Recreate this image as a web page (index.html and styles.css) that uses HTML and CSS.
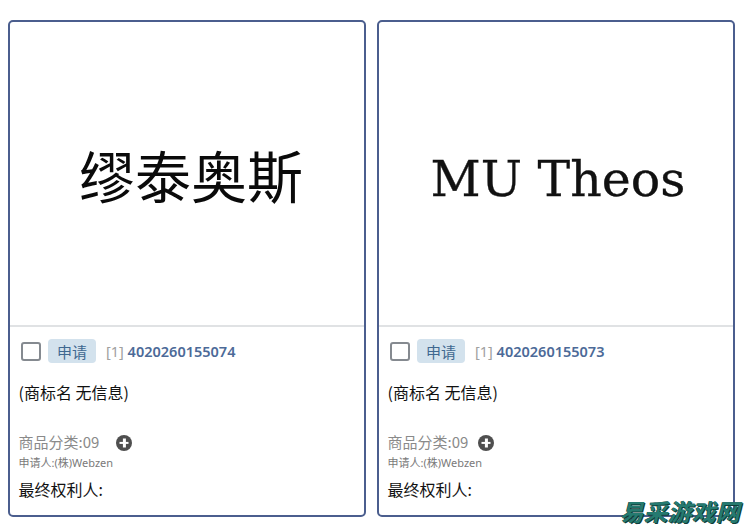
FILE: index.html
```html
<!DOCTYPE html>
<html lang="zh">
<head>
<meta charset="utf-8">
<title>商标</title>
<link rel="stylesheet" href="styles.css">
</head>
<body>
<div class="cards">
  <div class="card">
    <div class="logo"><span class="logo-cn">缪泰奥斯</span></div>
    <div class="info">
      <div class="row-top">
        <span class="checkbox"></span>
        <span class="apply-btn">申请</span>
        <span class="num"><span class="idx">[1]</span> 4020260155074</span>
      </div>
      <div class="name">(商标名 无信息)</div>
      <div class="category">商品分类:09<span class="plus plus-wide"></span></div>
      <div class="applicant">申请人:(株)Webzen</div>
      <div class="owner">最终权利人:</div>
    </div>
  </div>
  <div class="card">
    <div class="logo"><span class="logo-en">MU Theos</span></div>
    <div class="info">
      <div class="row-top">
        <span class="checkbox"></span>
        <span class="apply-btn">申请</span>
        <span class="num"><span class="idx">[1]</span> 4020260155073</span>
      </div>
      <div class="name">(商标名 无信息)</div>
      <div class="category">商品分类:09<span class="plus"></span></div>
      <div class="applicant">申请人:(株)Webzen</div>
      <div class="owner">最终权利人:</div>
    </div>
  </div>
</div>
<div class="watermark">易采游戏网</div>
</body>
</html>
```

FILE: styles.css
```css
html, body {
  margin: 0;
  padding: 0;
  background: #ffffff;
}
body {
  font-family: "Noto Sans", "Noto Sans CJK SC", sans-serif;
  color: #111;
  position: relative;
  width: 746px;
  height: 531px;
  overflow: hidden;
}
.cards {
  display: flex;
  gap: 11px;
  padding: 20px 0 0 8px;
}
.card {
  box-sizing: border-box;
  width: 358px;
  height: 497px;
  border: 2.5px solid #4b5e8e;
  border-radius: 5px;
  display: flex;
  flex-direction: column;
  background: #fff;
}
.logo {
  height: 303px;
  border-bottom: 2px solid #e0e2e4;
  display: flex;
  align-items: center;
  justify-content: center;
}
.logo-cn {
  font-family: "Noto Sans CJK SC", sans-serif;
  font-size: 56px;
  color: #0a0a0a;
  line-height: 1;
  margin-left: 8px;
}
.logo-en {
  font-family: "DejaVu Serif", serif;
  font-size: 49px;
  color: #111;
  line-height: 1;
  margin-top: 12px;
  margin-left: 4px;
  -webkit-text-stroke: 0.3px #111;
}
.info {
  padding: 12px 9px 0 8.5px;
}
.row-top {
  display: flex;
  align-items: center;
  height: 24px;
}
.checkbox {
  box-sizing: border-box;
  width: 20px;
  height: 19px;
  border: 2px solid #858a90;
  border-radius: 3px;
  margin-left: 2.5px;
}
.apply-btn {
  box-sizing: border-box;
  width: 48px;
  height: 24px;
  margin-left: 7px;
  border-radius: 4px;
  background: #d3e2ed;
  color: #3f6890;
  font-family: "Noto Sans CJK SC", sans-serif;
  font-size: 15px;
  display: flex;
  align-items: center;
  justify-content: center;
}
.num {
  margin-left: 10px;
  font-size: 14.5px;
  font-weight: 600;
  color: #4c6a98;
}
.idx {
  color: #a0a0a0;
  font-weight: 400;
}
.name {
  margin-top: 19px;
  font-family: "Noto Sans CJK SC", sans-serif;
  font-size: 16px;
  line-height: 20px;
  color: #111;
}
.category {
  margin-top: 30px;
  font-family: "Noto Sans CJK SC", sans-serif;
  font-size: 15px;
  line-height: 20px;
  color: #8a8a8a;
  display: flex;
  align-items: center;
}
.plus {
  position: relative;
  width: 16px;
  height: 16px;
  border-radius: 50%;
  background: #4f4f4f;
  margin-left: 10px;
  margin-top: 2px;
}
.plus-wide {
  margin-left: 17px;
}
.plus::before,
.plus::after {
  content: "";
  position: absolute;
  background: #fff;
  left: 50%;
  top: 50%;
  transform: translate(-50%, -50%);
}
.plus::before {
  width: 9px;
  height: 2.2px;
}
.plus::after {
  width: 2.2px;
  height: 9px;
}
.applicant {
  margin-top: 4px;
  font-size: 11px;
  line-height: 14px;
  color: #7a7a7a;
}
.owner {
  margin-top: 9px;
  font-family: "Noto Sans CJK SC", sans-serif;
  font-size: 16px;
  line-height: 20px;
  color: #111;
}
.watermark {
  position: absolute;
  left: 620px;
  top: 496px;
  font-family: "Noto Sans CJK SC", sans-serif;
  font-weight: 700;
  font-size: 23.5px;
  line-height: 30px;
  letter-spacing: 0.5px;
  color: #257a70;
  text-shadow: 1px 1px 0 #0f3d38, -0.5px -0.5px 0 #0f3d38;
  font-style: italic;
}
```
